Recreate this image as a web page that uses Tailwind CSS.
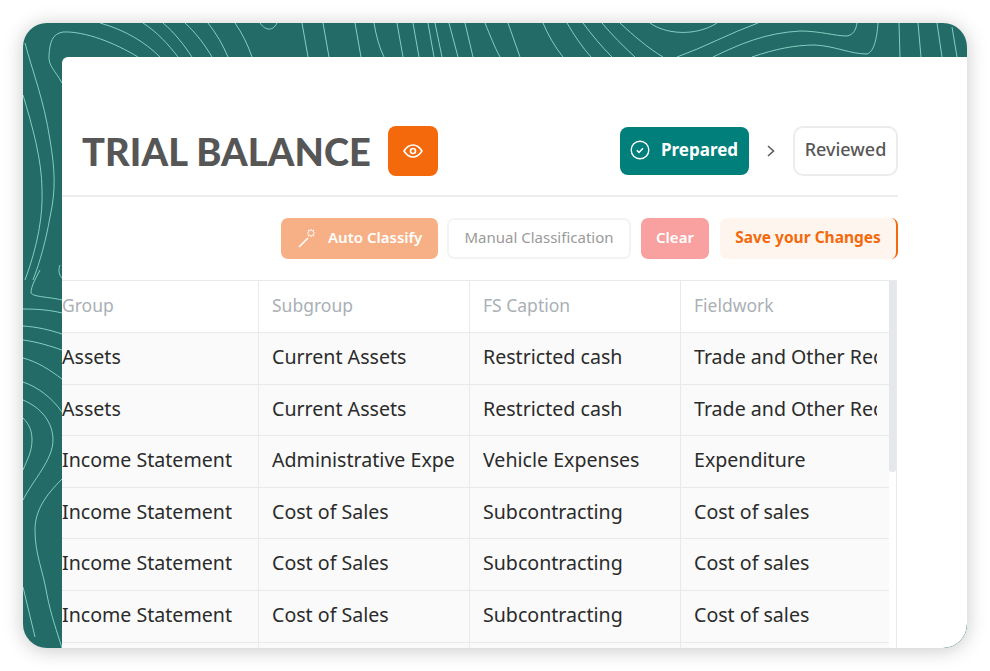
<!DOCTYPE html>
<html lang="en">
<head>
<meta charset="UTF-8">
<title>Trial Balance</title>
<script src="https://cdn.jsdelivr.net/npm/@tailwindcss/browser@4"></script>
</head>
<body class="bg-white w-[990px] h-[671px] overflow-hidden font-['Noto_Sans',sans-serif]">
<div class="pt-[23px] pl-[23px]">
  <div class="relative w-[944px] h-[625px] rounded-[24px] bg-[#226b66] shadow-[0_2px_20px_rgba(0,0,0,0.22)] overflow-hidden flex pl-[39px] pt-[34px]">
    <!-- contour lines -->
    <svg class="absolute inset-0" width="944" height="625" viewBox="23 23 944 625" fill="none" stroke="#9be8da" stroke-width="0.8">
      <path d="M62 83C55 70 48 66 49 55C50 42 52 34 63 32C85 31 115 43 138 57"/>
      <path d="M100 23C125 30 145 42 160 57M143 23C157 32 168 44 178 57M163 23C175 33 184 45 192 57M185 23C196 33 205 45 212 57M208 23C216 33 223 45 228 57M235 23C242 33 248 45 252 57"/>
      <path d="M260 23C264 29 272 33 277 23"/>
      <path d="M302 23L308 57M323 23L329 57M355 23L361 57M374 23C376 35 379 47 384 57M397 23L403 57M413 23L419 57M428 23L434 57M435 23L442 57M449 23L458 57M465 23L473 57M485 23C490 35 494 46 500 57"/>
      <path d="M508 23L520 57M543 23C548 35 555 47 563 57M567 23C574 35 582 47 591 57M583 23C592 35 601 46 612 57M602 23C612 35 623 46 635 57M620 23C634 36 648 48 663 57"/>
      <path d="M650 23C665 34 695 37 717 23"/>
      <path d="M677 57C705 47 730 33 758 23"/>
      <path d="M713 57C740 44 765 33 800 31C820 31 835 36 847 36C853 35 856 30 857 23"/>
      <path d="M752 57C775 49 795 45 815 45C835 46 850 54 867 54C874 52 877 38 878 23"/>
      <path d="M899 23L900 57M918 23L921 57M937 23L942 57M952 27L957 57"/>
      <path d="M25 43C32 70 44 100 50 140C55 170 56 190 50 217C46 240 40 262 33 280"/>
      <path d="M23 95C32 125 42 160 42 190C43 215 38 245 25 280"/>
      <path d="M60 265C58 270 59 275 62 278M40 270C36 278 31 286 31 293C33 297 50 297 62 300"/>
      <path d="M23 309C38 309 50 310 62 313M23 326C38 327 50 330 62 334M23 340C38 342 50 346 62 350M23 358C38 362 50 370 62 379"/>
      <path d="M23 382C38 387 52 398 62 412"/>
      <path d="M23 400C42 408 53 423 53 440C53 460 33 480 23 500"/>
      <path d="M23 418C30 425 32 432 32 440C32 452 27 460 23 470"/>
      <path d="M62 479C46 495 35 510 35 530C35 555 43 570 47 595C51 615 57 632 62 648"/>
      <path d="M23 587L35 637"/>
    </svg>

    <div class="relative flex-1 bg-white rounded-tl-[6px] rounded-br-[24px] pt-[69px] overflow-hidden">
      <div class="mr-[69px] h-[71px] pb-[20px] border-b-2 border-[#ececec] flex items-center justify-between pl-[20px]">
        <div class="flex items-center">
          <h1 class="font-['Lato',sans-serif] font-black text-[38px] leading-none tracking-[0.1px] text-[#565656] w-[286px] whitespace-nowrap">TRIAL BALANCE</h1>
          <button class="ml-[20px] w-[50px] h-[50px] rounded-[8px] bg-[#f4690b] flex items-center justify-center">
            <svg width="20" height="14" viewBox="0 0 20 14" fill="none" stroke="#fff" stroke-width="1.6"><path d="M1 7C3.5 3 6.5 1 10 1s6.5 2 9 6c-2.500 4-5.500 6-9 6S3.500 11 1 7Z"/><circle cx="10" cy="7" r="2.500"/></svg>
          </button>
        </div>
        <div class="flex items-center">
          <div class="w-[129px] h-[48px] rounded-[8px] bg-[#007f7b] flex items-center pl-[10px] pb-[1px] text-white font-bold text-[17px]">
            <svg width="20" height="20" viewBox="0 0 20 20" fill="none" stroke="#fff" stroke-width="1.400"><circle cx="10" cy="10" r="8.800"/><path d="M6.800 10.300l2.200 2.200 4-4.300" stroke-width="1.500"/></svg>
            <span class="ml-[11px]">Prepared</span>
          </div>
          <svg class="mx-[17px]" width="10" height="12" viewBox="0 0 10 12" fill="none" stroke="#5d5d5d" stroke-width="1.600"><path d="M2 1l5.500 5L2 11"/></svg>
          <div class="w-[105px] h-[50px] rounded-[10px] border-2 border-[#ececec] flex items-center justify-center pb-[2px] text-[#565656] font-medium text-[18px]">Reviewed</div>
        </div>
      </div>

      <div class="mr-[69px] mt-[21px] flex justify-end items-center h-[41px] text-[15px]">
        <div class="w-[157px] h-[41px] rounded-[7px] bg-[#f7b085] flex items-center pl-[17px] pb-[2px] text-white font-semibold">
          <svg width="20" height="20" viewBox="0 0 20 20" fill="none" stroke="#fff" stroke-width="1.200"><path d="M1 19L10 10" stroke-width="1.600"/><path d="M13 1v2M13 7v2M9 5h2M15 5h2M10 2l1.500 1.500M16 2l-1.500 1.500M10 8l1.500-1.500M16 8l-1.500-1.500"/></svg>
          <span class="ml-[10px] whitespace-nowrap">Auto Classify</span>
        </div>
        <div class="ml-[9px] w-[184px] h-[41px] rounded-[7px] border-2 border-[#f3f3f3] flex items-center justify-center pb-[2px] text-[#9a9a9a] whitespace-nowrap">Manual Classification</div>
        <div class="ml-[10px] w-[68px] h-[41px] rounded-[7px] bg-[#f9a0a0] flex items-center justify-center pb-[2px] text-white font-semibold">Clear</div>
        <div class="ml-[11px] w-[178px] h-[41px] rounded-[7px] bg-[#fff5ef] border-r-2 border-[#f4690b] flex items-center justify-center pb-[2px] text-[#f4690b] font-bold text-[15.500px] whitespace-nowrap">Save your Changes</div>
      </div>

      <div class="relative mt-[21px] w-[835px] border-t border-r border-[#e7e9ec] text-[19.600px] text-[#2b2b2b]">
        <div class="absolute right-0 top-0 w-[7px] h-[191px] rounded-b-[3px] bg-[#e5e7eb] z-10"></div>
        <div class="grid grid-cols-[197px_211px_211px_208px] h-[52px] bg-white text-[#aab0b5] text-[17.500px] border-b border-[#e7e9ec] mr-[7px]">
          <div class="flex items-center pb-[2px] border-r border-[#e7e9ec]">Group</div>
          <div class="flex items-center pb-[2px] pl-[13px] border-r border-[#e7e9ec]">Subgroup</div>
          <div class="flex items-center pb-[2px] pl-[13px] border-r border-[#e7e9ec]">FS Caption</div>
          <div class="flex items-center pb-[2px] pl-[13px]">Fieldwork</div>
        </div>
        <div class="grid grid-cols-[197px_211px_211px_208px] h-[51.600px] bg-[#fafafa] border-b border-[#e7e9ec] mr-[7px]">
          <div class="flex items-center pb-[3px] border-r border-[#e7e9ec] whitespace-nowrap overflow-hidden">Assets</div>
          <div class="flex items-center pb-[3px] border-r border-[#e7e9ec] pl-[13px]"><span class="w-[184px] overflow-hidden whitespace-nowrap">Current Assets</span></div>
          <div class="flex items-center pb-[3px] border-r border-[#e7e9ec] pl-[13px]"><span class="w-[184px] overflow-hidden whitespace-nowrap">Restricted cash</span></div>
          <div class="flex items-center pb-[3px] pl-[13px]"><span class="w-[183px] overflow-hidden whitespace-nowrap">Trade and Other Receivables</span></div>
        </div>
        <div class="grid grid-cols-[197px_211px_211px_208px] h-[51.600px] bg-[#fafafa] border-b border-[#e7e9ec] mr-[7px]">
          <div class="flex items-center pb-[3px] border-r border-[#e7e9ec] whitespace-nowrap overflow-hidden">Assets</div>
          <div class="flex items-center pb-[3px] border-r border-[#e7e9ec] pl-[13px]"><span class="w-[184px] overflow-hidden whitespace-nowrap">Current Assets</span></div>
          <div class="flex items-center pb-[3px] border-r border-[#e7e9ec] pl-[13px]"><span class="w-[184px] overflow-hidden whitespace-nowrap">Restricted cash</span></div>
          <div class="flex items-center pb-[3px] pl-[13px]"><span class="w-[183px] overflow-hidden whitespace-nowrap">Trade and Other Receivables</span></div>
        </div>
        <div class="grid grid-cols-[197px_211px_211px_208px] h-[51.600px] bg-[#fafafa] border-b border-[#e7e9ec] mr-[7px]">
          <div class="flex items-center pb-[3px] border-r border-[#e7e9ec] whitespace-nowrap overflow-hidden">Income Statement</div>
          <div class="flex items-center pb-[3px] border-r border-[#e7e9ec] pl-[13px]"><span class="w-[184px] overflow-hidden whitespace-nowrap">Administrative Expenses</span></div>
          <div class="flex items-center pb-[3px] border-r border-[#e7e9ec] pl-[13px]"><span class="w-[184px] overflow-hidden whitespace-nowrap">Vehicle Expenses</span></div>
          <div class="flex items-center pb-[3px] pl-[13px]"><span class="w-[183px] overflow-hidden whitespace-nowrap">Expenditure</span></div>
        </div>
        <div class="grid grid-cols-[197px_211px_211px_208px] h-[51.600px] bg-[#fafafa] border-b border-[#e7e9ec] mr-[7px]">
          <div class="flex items-center pb-[3px] border-r border-[#e7e9ec] whitespace-nowrap overflow-hidden">Income Statement</div>
          <div class="flex items-center pb-[3px] border-r border-[#e7e9ec] pl-[13px]"><span class="w-[184px] overflow-hidden whitespace-nowrap">Cost of Sales</span></div>
          <div class="flex items-center pb-[3px] border-r border-[#e7e9ec] pl-[13px]"><span class="w-[184px] overflow-hidden whitespace-nowrap">Subcontracting</span></div>
          <div class="flex items-center pb-[3px] pl-[13px]"><span class="w-[183px] overflow-hidden whitespace-nowrap">Cost of sales</span></div>
        </div>
        <div class="grid grid-cols-[197px_211px_211px_208px] h-[51.600px] bg-[#fafafa] border-b border-[#e7e9ec] mr-[7px]">
          <div class="flex items-center pb-[3px] border-r border-[#e7e9ec] whitespace-nowrap overflow-hidden">Income Statement</div>
          <div class="flex items-center pb-[3px] border-r border-[#e7e9ec] pl-[13px]"><span class="w-[184px] overflow-hidden whitespace-nowrap">Cost of Sales</span></div>
          <div class="flex items-center pb-[3px] border-r border-[#e7e9ec] pl-[13px]"><span class="w-[184px] overflow-hidden whitespace-nowrap">Subcontracting</span></div>
          <div class="flex items-center pb-[3px] pl-[13px]"><span class="w-[183px] overflow-hidden whitespace-nowrap">Cost of sales</span></div>
        </div>
        <div class="grid grid-cols-[197px_211px_211px_208px] h-[51.600px] bg-[#fafafa] border-b border-[#e7e9ec] mr-[7px]">
          <div class="flex items-center pb-[3px] border-r border-[#e7e9ec] whitespace-nowrap overflow-hidden">Income Statement</div>
          <div class="flex items-center pb-[3px] border-r border-[#e7e9ec] pl-[13px]"><span class="w-[184px] overflow-hidden whitespace-nowrap">Cost of Sales</span></div>
          <div class="flex items-center pb-[3px] border-r border-[#e7e9ec] pl-[13px]"><span class="w-[184px] overflow-hidden whitespace-nowrap">Subcontracting</span></div>
          <div class="flex items-center pb-[3px] pl-[13px]"><span class="w-[183px] overflow-hidden whitespace-nowrap">Cost of sales</span></div>
        </div>
        <div class="grid grid-cols-[197px_211px_211px_208px] h-[40px] bg-[#fafafa] mr-[7px]">
          <div class="border-r border-[#e7e9ec]"></div>
          <div class="border-r border-[#e7e9ec]"></div>
          <div class="border-r border-[#e7e9ec]"></div>
          <div></div>
        </div>
      </div>
    </div>
  </div>
</div>
</body>
</html>
